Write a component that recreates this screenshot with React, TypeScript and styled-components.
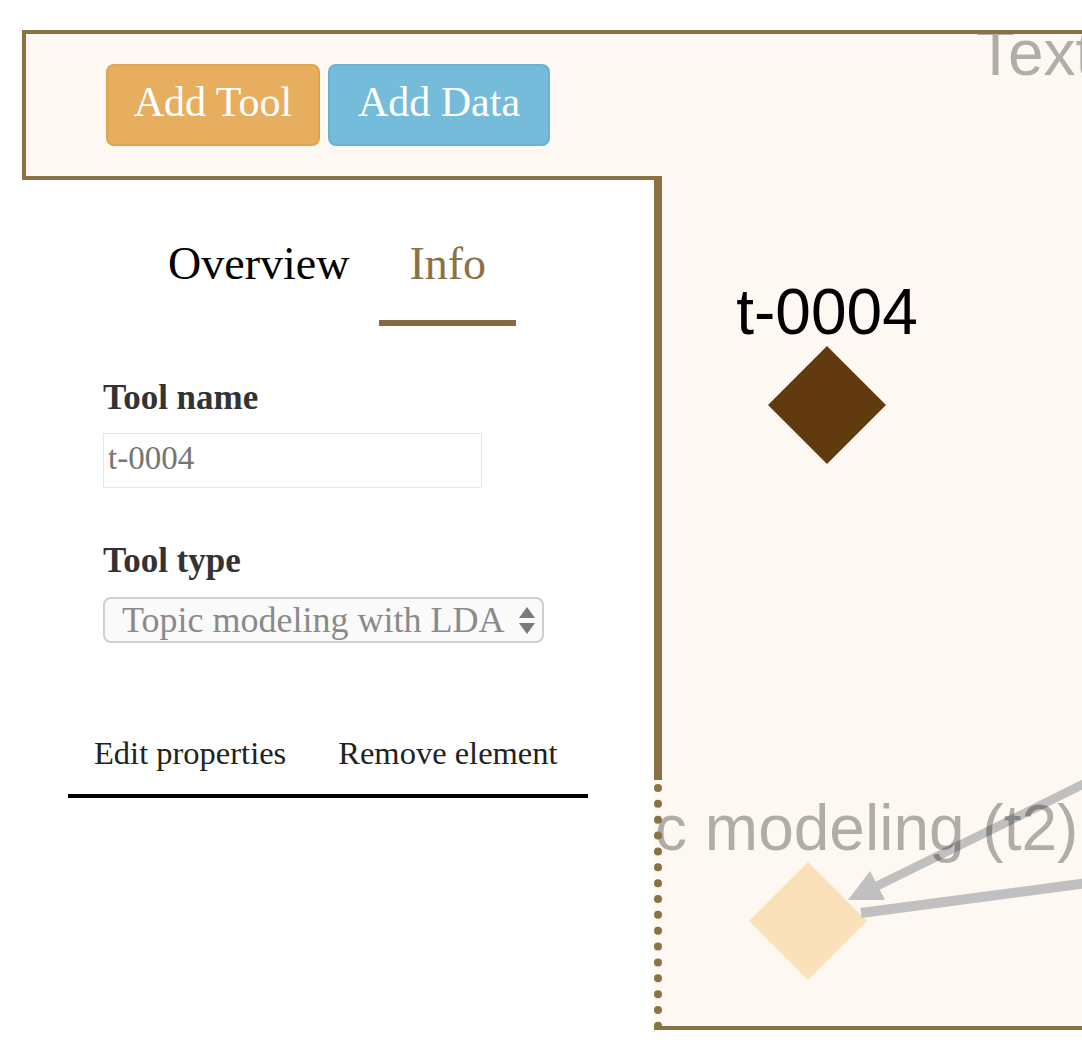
import React from 'react';
import styled, { createGlobalStyle } from 'styled-components';

const BROWN = '#8b7245';

const GlobalStyle = createGlobalStyle`
  html, body {
    margin: 0;
    padding: 0;
    background: #fff;
    overflow: hidden;
  }
  body {
    font-family: "Liberation Serif", "Times New Roman", serif;
  }
`;

const Frame = styled.div`
  position: relative;
  margin: 30px 0 0 22px;
  width: 1200px;
  height: 992px;
  border: 4px solid ${BROWN};
  background: #fdf8f1;
`;

const CanvasLayer = styled.div`
  position: absolute;
  inset: 0;
  overflow: hidden;
`;

const Toolbar = styled.div`
  position: relative;
  box-sizing: border-box;
  height: 142px;
  padding-left: 80px;
  display: flex;
  align-items: center;
  gap: 8px;
`;

const variants = {
  tool: { bg: '#e8ae5f', border: '#e2a351', width: 214 },
  data: { bg: '#74bcd9', border: '#67b3d3', width: 222 },
};

const ToolButton = styled.button<{ $variant: keyof typeof variants }>`
  box-sizing: border-box;
  width: ${(p) => variants[p.$variant].width}px;
  height: 82px;
  padding: 0 0 6px;
  border: 2px solid ${(p) => variants[p.$variant].border};
  border-radius: 8px;
  background: ${(p) => variants[p.$variant].bg};
  color: #fff;
  font-family: "Liberation Serif", "Times New Roman", serif;
  font-size: 42px;
  line-height: 1;
  cursor: pointer;
`;

const SidePanel = styled.aside`
  position: absolute;
  left: -4px;
  top: 142px;
  bottom: -4px;
  width: 640px;
  display: flex;
`;

const PanelBody = styled.div`
  flex: 1;
  background: #fff;
  border-top: 4px solid ${BROWN};
  padding-top: 57px;
`;

const PanelEdge = styled.div`
  width: 8px;
  display: flex;
  flex-direction: column;
`;

const EdgeSolid = styled.div`
  height: 604px;
  background: ${BROWN};
`;

const EdgeDotted = styled.div`
  flex: 1;
  margin-top: 4px;
  border-left: 8px dotted ${BROWN};
`;

const Tabs = styled.nav`
  display: flex;
  padding-left: 116px;
`;

const Tab = styled.div<{ $active?: boolean }>`
  padding: 0 30px 30px;
  font-size: 46px;
  line-height: 53px;
  color: ${(p) => (p.$active ? BROWN : '#000')};
  border-bottom: 6px solid ${(p) => (p.$active ? '#836a40' : 'transparent')};
  cursor: pointer;
`;

const Form = styled.div`
  padding-left: 81px;
`;

const FieldLabel = styled.div<{ $gap: number }>`
  margin-top: ${(p) => p.$gap}px;
  font-size: 35px;
  line-height: 40px;
  font-weight: bold;
  color: #333;
`;

const TextInput = styled.input`
  display: block;
  box-sizing: border-box;
  margin-top: 15px;
  width: 379px;
  height: 55px;
  padding: 0 0 4px 4px;
  border: 1px solid #e6e6e6;
  background: #fff;
  color: #888;
  font-family: "Liberation Serif", "Times New Roman", serif;
  font-size: 33px;
  outline: none;
`;

const SelectWrap = styled.div`
  position: relative;
  margin-top: 16px;
  width: 441px;
  height: 46px;
`;

const Select = styled.select`
  box-sizing: border-box;
  width: 100%;
  height: 100%;
  padding: 0 0 0 17px;
  border: 2px solid #cfcfcf;
  border-radius: 8px;
  background: #fafafa;
  color: #8a8a8a;
  font-family: "Liberation Serif", "Times New Roman", serif;
  font-size: 36px;
  appearance: none;
  -webkit-appearance: none;
`;

const SelectArrows = styled.svg`
  position: absolute;
  left: 416px;
  top: 10px;
  pointer-events: none;
`;

const Actions = styled.nav`
  display: flex;
  width: 520px;
  margin: 91px 0 0 46px;
  border-bottom: 4px solid #000;
`;

const ActionItem = styled.div`
  flex-shrink: 0;
  white-space: nowrap;
  padding: 0 26px 22px;
  font-size: 32.5px;
  line-height: 38px;
  color: #222;
  cursor: pointer;
`;

const LABEL_FONT = '"Liberation Sans", Arial, sans-serif';

function WorkflowCanvas() {
  return (
    <CanvasLayer>
      <svg width="1200" height="992" viewBox="26 34 1200 992">
        <text x="976" y="75" fontFamily={LABEL_FONT} fontSize="64" fill="rgba(0,0,0,0.3)">
          Text corpus (d1)
        </text>

        <text x="827" y="334" textAnchor="middle" fontFamily={LABEL_FONT} fontSize="64" fill="#000">
          t-0004
        </text>
        <polygon points="827,346 886,405 827,464 768,405" fill="#623a10" />

        <polygon points="808,862 867,921 808,980 749,921" fill="#fae1b9" />
        <line x1="1110" y1="771" x2="877" y2="886" stroke="#c0c0c0" strokeWidth="9" />
        <polygon points="848,900 870,871 885,900" fill="#c0c0c0" />
        <line x1="861" y1="913" x2="1110" y2="880" stroke="#c0c0c0" strokeWidth="10" />
        <text x="808" y="850" textAnchor="middle" fontFamily={LABEL_FONT} fontSize="64" fill="rgba(0,0,0,0.3)">
          Topic modeling (t2)
        </text>
      </svg>
    </CanvasLayer>
  );
}

export default function App() {
  return (
    <>
      <GlobalStyle />
      <Frame>
        <WorkflowCanvas />
        <Toolbar>
          <ToolButton $variant="tool">Add Tool</ToolButton>
          <ToolButton $variant="data">Add Data</ToolButton>
        </Toolbar>
        <SidePanel>
          <PanelBody>
            <Tabs>
              <Tab>Overview</Tab>
              <Tab $active>Info</Tab>
            </Tabs>
            <Form>
              <FieldLabel $gap={52}>Tool name</FieldLabel>
              <TextInput placeholder="t-0004" readOnly />
              <FieldLabel $gap={53}>Tool type</FieldLabel>
              <SelectWrap>
                <Select defaultValue="lda">
                  <option value="lda">Topic modeling with LDA</option>
                </Select>
                <SelectArrows width="16" height="28" viewBox="0 0 16 28">
                  <polygon points="8,0 16,11 0,11" fill="#7a7a7a" />
                  <polygon points="0,16 16,16 8,27" fill="#7a7a7a" />
                </SelectArrows>
              </SelectWrap>
            </Form>
            <Actions>
              <ActionItem>Edit properties</ActionItem>
              <ActionItem>Remove element</ActionItem>
            </Actions>
          </PanelBody>
          <PanelEdge>
            <EdgeSolid />
            <EdgeDotted />
          </PanelEdge>
        </SidePanel>
      </Frame>
    </>
  );
}
